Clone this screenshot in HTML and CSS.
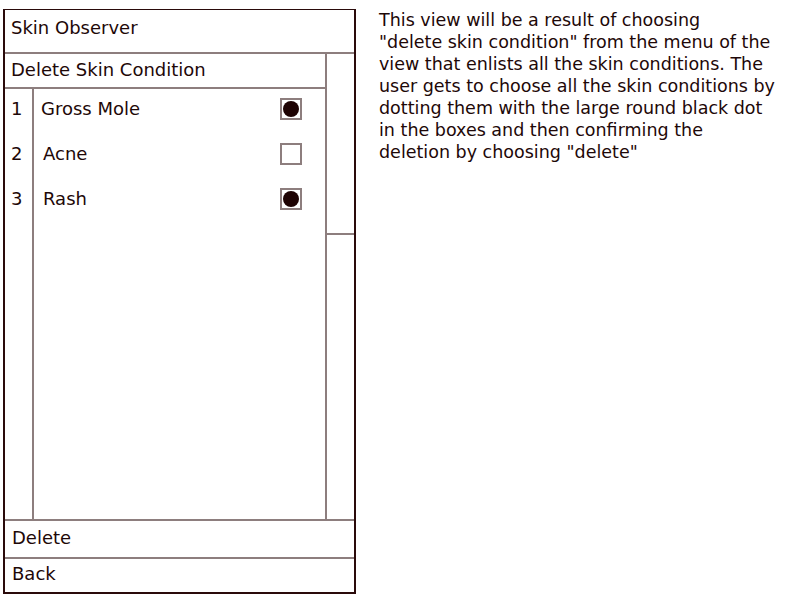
FILE: index.html
```html
<!DOCTYPE html>
<html>
<head>
<meta charset="utf-8">
<link rel="stylesheet" href="styles.css">
</head>
<body>
<div class="page">
  <div class="phone">
    <div class="title">Skin Observer</div>
    <div class="main">
      <div class="content">
        <div class="subtitle">Delete Skin Condition</div>
        <div class="list">
          <div class="nums">
            <div class="num">1</div>
            <div class="num">2</div>
            <div class="num">3</div>
          </div>
          <div class="items">
            <div class="item"><span class="label">Gross Mole</span><span class="box checked"><span class="dot"></span></span></div>
            <div class="item"><span class="label indent">Acne</span><span class="box"></span></div>
            <div class="item"><span class="label indent">Rash</span><span class="box checked"><span class="dot"></span></span></div>
          </div>
        </div>
      </div>
      <div class="scroll"><div class="thumb"></div></div>
    </div>
    <div class="action">Delete</div>
    <div class="action last">Back</div>
  </div>
  <p class="note">This view will be a result of choosing<br>"delete skin condition" from the menu of the<br>view that enlists all the skin conditions. The<br>user gets to choose all the skin conditions by<br>dotting them with the large round black dot<br>in the boxes and then confirming the<br>deletion by choosing "delete"</p>
</div>
</body>
</html>
```

FILE: styles.css
```css
html, body {
  margin: 0;
  padding: 0;
  background: #ffffff;
}

body {
  font-family: "DejaVu Sans", sans-serif;
  font-size: 17.5px;
  color: #1e0808;
}

.page {
  display: flex;
  align-items: flex-start;
  padding: 9px 0 0 3px;
}

.phone {
  width: 349px;
  height: 582px;
  border: 2px solid #2a0a0a;
  border-top-width: 1px;
  display: flex;
  flex-direction: column;
  flex: none;
  font-size: 18px;
}

.title {
  height: 34px;
  padding-bottom: 8px;
  border-bottom: 2px solid #8d7e7e;
  padding-left: 6px;
  display: flex;
  align-items: center;
  flex: none;
}

.main {
  flex: 1;
  display: flex;
  min-height: 0;
}

.content {
  flex: 1;
  display: flex;
  flex-direction: column;
}

.subtitle {
  height: 31px;
  padding-bottom: 2px;
  border-bottom: 2px solid #8d7e7e;
  padding-left: 6px;
  display: flex;
  align-items: center;
  flex: none;
}

.list {
  flex: 1;
  display: flex;
}

.nums {
  width: 27px;
  border-right: 2px solid #8d7e7e;
}

.num,
.item {
  height: 45px;
  padding-bottom: 6px;
  box-sizing: border-box;
  display: flex;
  align-items: center;
}

.num {
  padding-left: 6px;
}

.items {
  flex: 1;
}

.item {
  justify-content: space-between;
  padding-left: 7px;
  padding-right: 23px;
}

.label.indent {
  margin-left: 2px;
}

.box {
  width: 18px;
  height: 18px;
  border: 2px solid #8d7e7e;
  display: flex;
  align-items: center;
  justify-content: center;
}

.dot {
  width: 16px;
  height: 16px;
  border-radius: 50%;
  background: #1e0303;
}

.scroll {
  width: 27px;
  border-left: 2px solid #8d7e7e;
}

.thumb {
  height: 179px;
  border-bottom: 2px solid #8d7e7e;
}

.action {
  height: 32px;
  padding-bottom: 4px;
  border-top: 2px solid #8d7e7e;
  padding-left: 7px;
  display: flex;
  align-items: center;
  flex: none;
}

.action.last {
  height: 28px;
  padding-bottom: 5px;
}

.note {
  margin: 0 0 0 23px;
  line-height: 22px;
}
```
